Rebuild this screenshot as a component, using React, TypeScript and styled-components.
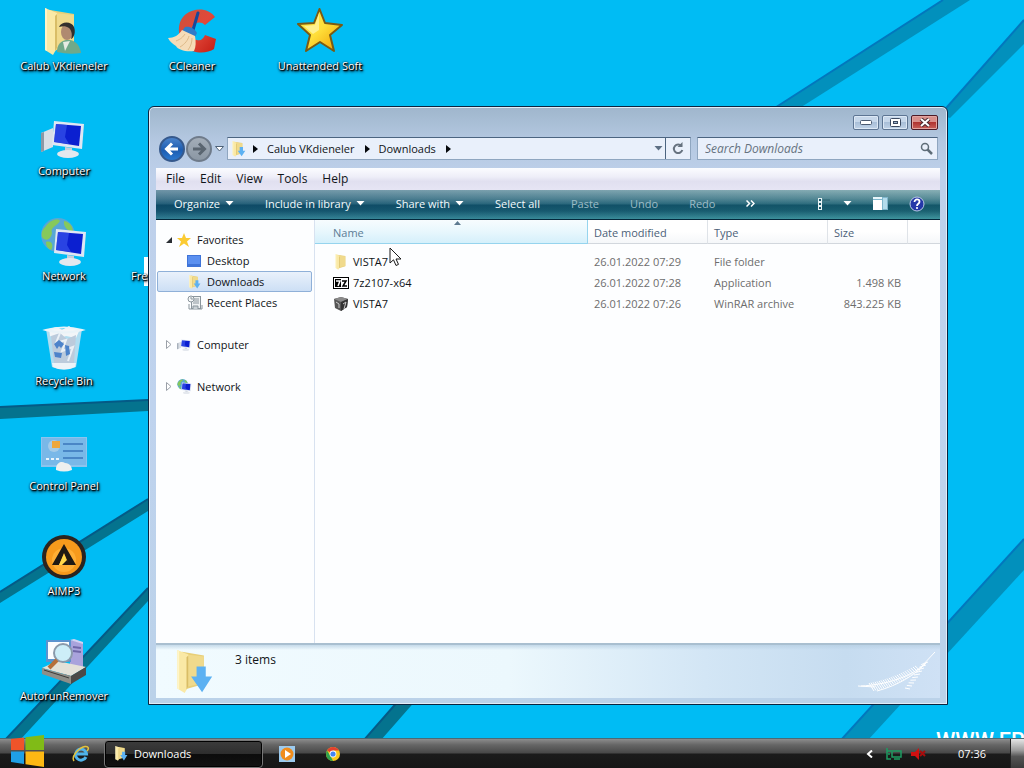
import React from 'react';
import styled, { createGlobalStyle, css } from 'styled-components';

const GlobalStyle = createGlobalStyle`
  *, *::before, *::after { box-sizing: border-box; }
  body {
    margin: 0;
    font-family: 'Open Sans', 'Noto Sans', sans-serif;
    font-size: 11px;
    line-height: 16px;
    color: #101418;
    overflow: hidden;
  }
  button, input { font: inherit; color: inherit; }
  button { border: 0; padding: 0; background: none; }
  a { color: inherit; text-decoration: none; }
  svg { display: block; flex: none; }
`;

/* ---------- desktop ---------- */

const Screen = styled.div`
  display: flex;
  flex-direction: column;
  height: 100vh;
`;

const Desktop = styled.main`
  position: relative;
  flex: 1;
  min-height: 0;
  overflow: hidden;
  background: #00bcf4;
`;

const Wallpaper = styled.svg`
  position: absolute;
  inset: 0;
  width: 100%;
  height: 100%;
`;

const IconGrid = styled.div`
  position: relative;
  display: grid;
  grid-template-columns: repeat(3, 128px);
  grid-auto-rows: 105px;
`;

const labelText = css`
  color: #fff;
  font-size: 11px;
  line-height: 16px;
  white-space: nowrap;
  text-shadow: 1px 1px 1px #000, 1px 1px 2px #000, 1px 2px 3px #012, 0 0 2px #024;
`;

const Shortcut = styled.button<{ $col: number; $row: number }>`
  grid-column: ${p => p.$col};
  grid-row: ${p => p.$row};
  display: flex;
  flex-direction: column;
  align-items: center;
  gap: 2px;
  padding-top: 8px;
`;

const ShortcutLabel = styled.span`
  ${labelText}
`;

const StackedShortcut = styled.button`
  grid-column: 2;
  grid-row: 3;
  display: grid;
  justify-items: start;
  align-content: start;
  padding: 47px 0 0 3px;
  > * { grid-area: 1 / 1; }
`;

const Sheet = styled.span`
  width: 24px;
  height: 29px;
  margin-left: 13px;
  background: #fff;
`;

const StackedLabel = styled.span`
  ${labelText}
  padding-top: 11px;
`;

const Cursor = styled.svg`
  position: absolute;
  left: 389px;
  top: 247px;
`;

/* ---------- window ---------- */

const Window = styled.section`
  position: absolute;
  left: 148px;
  top: 106px;
  right: 76px;
  bottom: 33px;
  display: flex;
  flex-direction: column;
  padding: 0 7px 6px;
  border: 1px solid #0b2440;
  border-radius: 6px 6px 0 0;
  background: linear-gradient(180deg, #9fb6cc 0, #b4c8e1 34px, #bed0ea 70px, #bfd3ee 300px, #bbd2e9 100%);
  box-shadow: inset 0 0 0 1px #e2edf7;
`;

const TitleBar = styled.header`
  display: flex;
  justify-content: flex-end;
  gap: 3px;
  padding: 8px 2px 7px 0;
`;

const Caption = styled.button<{ $close?: boolean }>`
  display: flex;
  align-items: center;
  justify-content: center;
  width: ${p => (p.$close ? '27px' : '26px')};
  height: 15px;
  border: 1px solid ${p => (p.$close ? '#4d1a26' : '#5d7593')};
  border-radius: 2px;
  background: ${p =>
    p.$close
      ? 'linear-gradient(180deg, #d88f8b 0 45%, #b03431 50%, #c9605a 100%)'
      : 'linear-gradient(180deg, #c6d7ea 0 45%, #a9bfd8 50%, #c0d3e8 100%)'};
  box-shadow: inset 0 0 0 1px ${p => (p.$close ? '#e2a5a0' : '#dce8f5')};
`;

const NavRow = styled.div`
  display: flex;
  align-items: center;
  gap: 6px;
  height: 23px;
  margin-bottom: 8px;
  padding: 0 2px 0 3px;
`;

const History = styled.div`
  display: flex;
  align-items: center;
  gap: 1px;
  width: 62px;
`;

const Round = styled.button<{ $muted?: boolean }>`
  width: 26px;
  height: 26px;
  border: 2px solid ${p => (p.$muted ? '#6f7b8a' : '#36598c')};
  border-radius: 50%;
  background: ${p =>
    p.$muted
      ? 'linear-gradient(180deg, #a3adb8, #8b97a4)'
      : 'linear-gradient(180deg, #4a83cb, #1d5cb0 55%, #2a78cf)'};
`;

const Recent = styled.button`
  padding: 2px;
`;

const fieldBox = css`
  border: 1px solid #8fa6c0;
  border-top-color: #4b6480;
  background: #e9f0fb;
`;

const Address = styled.div`
  ${fieldBox}
  flex: 460 1 0;
  display: flex;
  align-items: center;
  align-self: stretch;
  min-width: 0;
  padding-left: 2px;
`;

const RootCrumb = styled.button`
  padding-left: 7px;
`;

const Crumb = styled.a`
  padding: 0 10px 0 9px;
  white-space: nowrap;
`;

const Spacer = styled.span`
  flex: 1;
`;

const DropButton = styled.button`
  padding: 0 2px;
`;

const Refresh = styled.button`
  display: flex;
  align-items: center;
  justify-content: center;
  align-self: stretch;
  width: 25px;
  border-left: 1px solid #4b6480;
`;

const Search = styled.label`
  ${fieldBox}
  flex: 228 1 0;
  display: flex;
  align-items: center;
  align-self: stretch;
  min-width: 0;
  padding: 0 4px 0 7px;
`;

const SearchInput = styled.input`
  flex: 1;
  min-width: 0;
  padding: 0;
  border: 0;
  outline: 0;
  background: none;
  font-size: 12px;
  &::placeholder { color: #66727f; font-style: italic; opacity: 1; }
`;

const MenuBar = styled.nav`
  display: flex;
  align-items: center;
  gap: 15px;
  height: 22px;
  padding-left: 10px;
  background: linear-gradient(180deg, #fbfcff 0, #eeeef8 40%, #e1e0f0 60%, #e6e5f4 100%);
`;

const MenuItem = styled.button`
  font-size: 12px;
`;

const CommandBar = styled.div`
  display: flex;
  align-items: center;
  gap: 31px;
  height: 30px;
  padding: 0 15px 2px 18px;
  border-bottom: 1px solid #03283c;
  background:
    linear-gradient(90deg, rgba(10, 60, 110, 0.25), rgba(60, 150, 140, 0.12)),
    linear-gradient(180deg, #93b3bb 0, #5a8a98 30%, #2d6a7d 48%, #0e4d63 52%, #16596d 72%, #4095a0 100%);
`;

const Command = styled.button<{ $muted?: boolean }>`
  display: flex;
  align-items: center;
  gap: 5px;
  color: ${p => (p.$muted ? '#9dbcc6' : '#f2fafc')};
  white-space: nowrap;
`;

const ViewTools = styled.div`
  display: flex;
  align-items: center;
  gap: 21px;
  margin-left: auto;
`;

const ViewSwitch = styled.button`
  display: flex;
  align-items: center;
  gap: 13px;
`;

const Body = styled.div`
  flex: 1;
  display: flex;
  min-height: 0;
  background: #fdfeff;
`;

const Sidebar = styled.nav`
  width: 159px;
  flex: none;
  padding: 9px 2px 0 1px;
  border-right: 1px solid #d8e2f0;
`;

const Tree = styled.ul`
  display: flex;
  flex-direction: column;
  gap: 21px;
  margin: 0;
  padding: 0;
  list-style: none;
`;

const Branch = styled.ul`
  margin: 0;
  padding: 0;
  list-style: none;
`;

const TreeLink = styled.a<{ $child?: boolean; $selected?: boolean }>`
  display: flex;
  align-items: center;
  height: 21px;
  padding-left: ${p => (p.$child ? '29px' : '8px')};
  border: 1px solid transparent;
  border-radius: 2px;
  white-space: nowrap;
  ${p =>
    p.$selected &&
    css`
      border-color: #8fb0d8;
      background: linear-gradient(180deg, #e9f1fb, #cddff5);
    `}
`;

const TreeIcon = styled.span`
  width: 20px;
  flex: none;
`;

const Twisty = styled.span`
  width: 11px;
  flex: none;
`;

const Listing = styled.div`
  flex: 1;
  min-width: 0;
`;

const Files = styled.table`
  width: 100%;
  table-layout: fixed;
  border-collapse: separate;
  border-spacing: 0;
  tbody::before { content: ''; display: block; height: 7px; }
`;

const Col = styled.col<{ $w?: number }>`
  width: ${p => (p.$w ? `${p.$w}px` : 'auto')};
`;

const Head = styled.th<{ $sorted?: boolean }>`
  position: relative;
  height: 24px;
  padding: 2px 6px 0;
  text-align: left;
  font-weight: 400;
  color: #4c5f78;
  border-right: 1px solid #dfe3e8;
  border-bottom: 1px solid #d2d7dd;
  background: linear-gradient(180deg, #fff 0 50%, #f5f7f9 100%);
  &:last-child { border-right: 0; }
  ${p =>
    p.$sorted &&
    css`
      padding-left: 18px;
      color: #5c7d96;
      border-color: #96d4ee;
      background: linear-gradient(180deg, #f7fcfe 0, #e8f7fd 50%, #d5f0fb 100%);
    `}
`;

const SortMark = styled.svg`
  position: absolute;
  top: 1px;
  left: 51%;
`;

const Cell = styled.td<{ $right?: boolean }>`
  height: 21px;
  padding: 0 7px 0 6px;
  color: #6d6d6d;
  text-align: ${p => (p.$right ? 'right' : 'left')};
  white-space: nowrap;
`;

const FileName = styled.a`
  display: flex;
  align-items: center;
  gap: 4px;
  padding-left: 12px;
  color: #101418;
`;

const Details = styled.footer`
  display: flex;
  align-items: flex-start;
  height: 55px;
  padding: 5px 3px 0 14px;
  border-top: 2px solid #a9bfd0;
  background:
    linear-gradient(180deg, rgba(180, 205, 225, 0.7), rgba(180, 205, 225, 0) 5px),
    linear-gradient(90deg, #f1fbff 0, #ecf8fd 45%, #d3e6f5 70%, #c6dcf0 88%, #cfe1f5 100%);
`;

const Count = styled.p`
  flex: 1;
  margin: 2px 0 0 21px;
  font-size: 12px;
`;

/* ---------- taskbar ---------- */

const Taskbar = styled.footer`
  position: relative;
  display: flex;
  align-items: center;
  height: 30px;
  border-top: 1px solid #4b6a76;
  background: linear-gradient(180deg, #8d8d8d 0, #666 20%, #484848 48%, #1b1b1b 52%, #161616 100%);
`;

const Start = styled.button`
  margin: -6px 0 0 11px;
  height: 32px;
`;

const TaskIcon = styled.button`
  display: flex;
  justify-content: center;
  width: 46px;
`;

const QuickLaunch = styled.div`
  display: flex;
  justify-content: center;
  width: 59px;
  padding-left: 12px;
`;

const TaskButton = styled.button`
  display: flex;
  align-items: center;
  gap: 6px;
  width: 159px;
  height: 28px;
  margin-right: 1px;
  padding-left: 8px;
  border: 1px solid #777;
  border-radius: 4px;
  color: #fff;
  background: linear-gradient(180deg, #3c3c3c 0, #2e2e2e 48%, #0c0c0c 52%, #121212 100%);
  box-shadow: inset 0 0 0 1px #000;
`;

const Tray = styled.div`
  display: flex;
  align-items: center;
  margin-left: auto;
  height: 100%;
  color: #fff;
`;

const TrayIcons = styled.div`
  display: flex;
  align-items: center;
  gap: 9px;
`;

const TrayToggle = styled.button`
  padding-right: 4px;
`;

const Clock = styled.time`
  margin: 0 24px 0 32px;
`;

const ShowDesktop = styled.button`
  width: 14px;
  height: 100%;
  border-left: 1px solid #222;
  background: linear-gradient(180deg, #e6e6e6 0, #9a9a9a 40%, #555 60%, #3a3a3a 100%);
`;

/* ---------- drawings ---------- */

const FolderShape = () => (
  <>
    <path d="M13 2 L37 6 V37 L13 44Z" fill="#e8cf78" />
    <path d="M18 5 L37 7 V36 L18 40Z" fill="#f0da8c" />
    <path d="M8 0 L20 5 V40 L16 47 L8 42Z" fill="#fae9a6" />
    <path d="M8 0 L10 1 V43 L8 42Z" fill="#fff5c8" />
    <path d="M20 6 V40 L18 43 V8Z" fill="#d9bd66" />
  </>
);

const UserFolder = () => (
  <svg width="48" height="48" viewBox="0 0 48 48">
    <g transform="translate(-3 0)">
      <FolderShape />
      <path d="M20 44 C20 36 24 33 29 32 H33 C39 33 43 38 44 45 Q32 47 20 44Z" fill="#6fa98a" />
      <path d="M26 34 L28 43 L33 33Z" fill="#e6ebe4" />
      <ellipse cx="30" cy="24" rx="6" ry="8" fill="#b08a70" />
      <path d="M22 19 C24 13 35 13 37 19 C39 24 37 30 34 31 C36 26 34 22 32 20 C29 18 26 18 22 19Z" fill="#33302d" />
    </g>
  </svg>
);

const CCleaner = () => (
  <svg width="48" height="48" viewBox="0 0 48 48">
    <defs>
      <linearGradient id="cc" x1="0" y1="0" x2="1" y2="1">
        <stop offset="0" stopColor="#c9523c" />
        <stop offset=".5" stopColor="#e2483a" />
        <stop offset="1" stopColor="#c41d14" />
      </linearGradient>
    </defs>
    <path d="M47 9 L37 17 C33 13 27 14 24 19 C22 24 24 31 29 32 C33 33 35 31 37 27 L48 31 L46 41 C39 46 25 46 18 39 C9 30 8 14 18 6 C27 -1 41 0 47 9Z" fill="url(#cc)" />
    <path d="M30 5 L25 22" stroke="#17489a" strokeWidth="3" strokeLinecap="round" />
    <path d="M17 19 C22 18 27 21 29 25 L27 29 L14 23Z" fill="#2f7bc8" />
    <path d="M14 22 L27 28 C28 34 28 39 26 43 C18 44 10 42 8 38 C5 36 2 34 0 30 C6 30 11 27 14 22Z" fill="#f5dcb8" />
    <path d="M8 33 C13 31 15 29 17 26 M12 39 C17 36 20 32 21 28 M20 42 C23 38 24 34 24 30" stroke="#ddb988" fill="none" />
  </svg>
);

const Star = () => (
  <svg width="48" height="48" viewBox="0 0 48 48">
    <defs>
      <linearGradient id="st" x1="0" y1="0" x2="1" y2="1">
        <stop offset="0" stopColor="#ffe94a" />
        <stop offset=".5" stopColor="#ffdf3a" />
        <stop offset="1" stopColor="#ee9a00" />
      </linearGradient>
    </defs>
    <path d="M23.500 1 L29 15 L46 17 L34 27 L38 43 L24 34 L10 43 L14 27 L2 16 L18 15Z" fill="url(#st)" stroke="#7a5a14" strokeWidth="2" strokeLinejoin="round" />
    <path d="M23 5 L19 17 L8 18 L17 26 L23 22Z" fill="#fff8b0" opacity=".7" />
  </svg>
);

const Monitor = () => (
  <>
    <path d="M14 8 L44 11 L42 36 L12 32Z" fill="#dfe6f3" />
    <path d="M16 11 L41 13 L39 33 L14 29Z" fill="#0b1fd0" />
    <path d="M16 11 L27 12 L25 24 L29 31 L14 29Z" fill="#3d5cf0" opacity=".6" />
    <path d="M25 34 L32 35 V41 H25Z" fill="#c8cfda" />
    <ellipse cx="28" cy="41" rx="11" ry="4" fill="#e4e8ee" />
  </>
);

const ComputerIcon = ({ size = 48 }: { size?: number }) => (
  <svg width={size} height={size} viewBox="0 0 48 48">
    <path d="M1 20 L13 15 V34 L1 39Z" fill="#dadfe6" />
    <path d="M1 20 L4 19 V38 L1 39Z" fill="#8d98a5" />
    <Monitor />
  </svg>
);

const NetworkIcon = ({ size = 48 }: { size?: number }) => (
  <svg width={size} height={size} viewBox="0 0 48 48">
    <circle cx="18" cy="17" r="17" fill="#57a7d6" />
    <path d="M6 8 C10 2 18 0 20 3 C17 8 10 9 12 15 C11 22 5 24 2 19 C1 14 3 11 6 8Z M6 24 C12 22 14 28 11 32 C7 30 6 27 6 24Z M24 3 C30 4 33 9 33 14 C28 13 23 9 24 3Z" fill="#86c95b" />
    <g transform="translate(2 3)"><Monitor /></g>
  </svg>
);

const RecycleBin = () => (
  <svg width="48" height="48" viewBox="0 0 48 48">
    <path d="M6 6 L42 6 L36 44 Q24 49 12 44Z" fill="#cfe3f0" opacity=".85" />
    <path d="M9 6 L17 4 L22 7 L29 3 L33 6 L40 6 L36 15 L26 13 L18 16 L10 13Z" fill="#f2f5f8" />
    <path d="M11 13 L20 10 L27 16 L36 12 L34 40 L24 43 L14 40Z" fill="#bccbdc" />
    <path d="M20 10 L16 20 L26 17 L22 28 L33 24 L28 38" fill="none" stroke="#eaf0f6" strokeWidth="2" />
    <path d="M14 21 L19 17 L24 21 L21 25 L19 23 L17 26Z M25 22 L29 23 L30 31 L26 33Z M14 29 L22 30 L21 35 L15 34Z" fill="#4d83ca" />
    <path d="M12 40 L36 40 L35 44 Q24 49 13 44Z" fill="#edf3f8" />
    <path d="M6 7 Q24 2 42 7 Q24 12 6 7Z" fill="none" stroke="#eaf3f8" strokeWidth="2" />
  </svg>
);

const ControlPanel = () => (
  <svg width="48" height="48" viewBox="0 0 48 48">
    <rect x="1" y="9" width="46" height="30" fill="#8cc4ee" />
    <rect x="2" y="10" width="44" height="27" fill="#79b8e8" />
    <circle cx="14" cy="18" r="6" fill="#a4cbe8" />
    <path d="M12 13 H20 V20 H12Z" fill="#eda73c" />
    <path d="M23 16 H43 M23 23 H43 M23 30 H43" stroke="#4a86c6" strokeWidth="2" />
    <path d="M6 31 H19" stroke="#e8f4fc" strokeWidth="2" strokeDasharray="3 2" />
    <path d="M16 40 C17 34 22 33 25 35 C30 35 32 39 32 42 Q24 45 16 42Z" fill="#edf0ef" />
  </svg>
);

const Aimp = () => (
  <svg width="48" height="48" viewBox="0 0 48 48">
    <circle cx="24" cy="24" r="22" fill="#2a2420" />
    <circle cx="24" cy="24" r="18" fill="#f79a1c" />
    <circle cx="24" cy="27" r="12" fill="#ffae34" />
    <path d="M24 11 L36 32 H29 L24 20 L19 32 H12Z" fill="#201a14" />
    <path d="M24 21 L27 28 L22 32 H19Z" fill="#ffd84a" />
    <path d="M22 32 L27 27 L30 32Z" fill="#201a14" />
  </svg>
);

const Autorun = () => (
  <svg width="48" height="48" viewBox="0 0 48 48">
    <path d="M30 2 L43 5 V30 L30 32Z" fill="#a9a3dc" />
    <path d="M30 2 L34 1 L43 4 V6Z" fill="#d5d2f3" />
    <path d="M33 9 L41 10 M33 13 L41 14" stroke="#6e67a8" strokeWidth="2" />
    <path d="M6 2 H31 V24 H6Z" fill="#5b93cf" />
    <path d="M8 4 H29 V21 H8Z" fill="#fbfdff" />
    <path d="M2 30 L17 23 L46 29 L31 38Z" fill="#e3e1d8" />
    <path d="M2 30 L31 38 V46 L2 36Z" fill="#8f8e88" />
    <path d="M31 38 L46 29 V37 L31 46Z" fill="#4b4a48" />
    <path d="M4 32 L29 40" stroke="#3c3b39" />
    <circle cx="23" cy="15" r="9" fill="#cdeef8" stroke="#8b9aab" strokeWidth="2" />
    <path d="M17 22 L9 30" stroke="#b66f3a" strokeWidth="4" />
  </svg>
);

const FolderIcon = ({ size = 16, arrow = false }: { size?: number; arrow?: boolean }) => (
  <svg width={size} height={size} viewBox="0 0 48 48">
    <FolderShape />
    {arrow && <path d="M29 18 H39 V29 H46 L35 46 L23 29 H29Z" fill="#5cb1f2" />}
  </svg>
);

const SmallStar = () => (
  <svg width="14" height="14" viewBox="0 0 14 14">
    <path d="M7 0 L9 5 L14 5 L10 8.500 L12 14 L7 10.500 L2 14 L4 8.500 L0 5 L5 5Z" fill="#fbcb33" />
  </svg>
);

const DesktopGlyph = () => (
  <svg width="14" height="12" viewBox="0 0 14 12">
    <rect width="14" height="12" fill="#3f74d8" />
    <rect x="1" y="1" width="12" height="8" fill="#5b90f0" />
  </svg>
);

const RecentGlyph = () => (
  <svg width="16" height="16" viewBox="0 0 16 16" fill="none" stroke="#8b969d">
    <rect x="4.500" y="1.500" width="9" height="12" fill="#eef1f2" />
    <circle cx="4" cy="4" r="3" fill="#f6f8f8" />
    <path d="M4 2 V4 H6 M7 4 H12 M7 6 H12 M6 8 H12 M2 9 V14 H15 V10" />
    <path d="M6 14 V11 H11 V14" fill="#c8d0d4" />
  </svg>
);

const Caret = ({ color = '#fff' }: { color?: string }) => (
  <svg width="9" height="5" viewBox="0 0 9 5"><path d="M.500 0 H8.500 L4.500 4.500Z" fill={color} /></svg>
);

const Chevron = () => (
  <svg width="5" height="8" viewBox="0 0 5 8"><path d="M0 0 L5 4 L0 8Z" fill="#05080c" /></svg>
);

const SevenZip = () => (
  <svg width="16" height="12" viewBox="0 0 16 12">
    <rect width="16" height="12" fill="#000" />
    <rect x="1" y="1" width="14" height="10" fill="#fff" />
    <rect x="2" y="2" width="6" height="8" fill="#000" />
    <path d="M3 4 H7 L5 9" fill="none" stroke="#fff" strokeWidth="1.500" />
    <path d="M9 4 H13 L10 9 H14" fill="none" stroke="#000" strokeWidth="1.500" />
  </svg>
);

const Archive = () => (
  <svg width="16" height="16" viewBox="0 0 16 16">
    <path d="M1 3 L8 1 L15 3 L14 11 L8 15 L2 12Z" fill="#555" />
    <path d="M1 3 L8 1 L15 3 L8 6Z" fill="#8a8a8a" />
    <path d="M8 6 L15 3 L14 11 L8 15Z" fill="#333" />
    <path d="M3 6 L6 8 V12 M10 8 L13 6 L11 13" fill="none" stroke="#c8c8c8" />
  </svg>
);

const Feather = () => (
  <svg width="80" height="44" viewBox="0 0 80 44" fill="none" stroke="#fff">
    {Array.from({ length: 24 }, (_, i) => {
      const x = 12 + i * 2;
      const y = 37 - i * 0.4 - i * i * 0.018;
      const h = 8 - i * 0.14;
      return <path key={i} d={`M${x} ${y - h / 2} L${x + 5} ${y + h / 2}`} />;
    })}
    {Array.from({ length: 10 }, (_, i) => (
      <path key={i} d={`M${48 + i * 1.8} ${38 - i * 2.6} L${53 + i * 2} ${39 - i * 3}`} />
    ))}
    <path d="M1 36 L18 37 M4 36 C28 35 52 27 64 17 L78 2 M20 41 C42 35 58 25 70 12" />
  </svg>
);

const Windows = () => (
  <svg width="34" height="32" viewBox="0 0 34 32">
    <path d="M0 4 L13 2.500 V15 H0Z" fill="#f0542a" />
    <path d="M14.500 2.300 L33 0 V15 H14.500Z" fill="#80bb17" />
    <path d="M0 16.500 H13 V29 L0 27Z" fill="#1f9fe6" />
    <path d="M14.500 16.500 H33 V32 L14.500 29.300Z" fill="#fdb813" />
  </svg>
);

const Explorer = () => (
  <svg width="18" height="18" viewBox="0 0 18 18" fill="none">
    <path d="M14 12 A5.500 5.500 0 1 1 14.500 9 H5" stroke="#4fb3ea" strokeWidth="3" />
    <path d="M2 16 C-1 12 6 3 13 1.500 C17 1 17 4 15 6" stroke="#e5c33a" strokeWidth="1.500" />
  </svg>
);

const MediaPlayer = () => (
  <svg width="16" height="16" viewBox="0 0 16 16">
    <rect width="16" height="16" fill="#9ccbef" />
    <circle cx="8" cy="8" r="6.500" fill="#f08c1c" />
    <path d="M6 4 L12 8 L6 12Z" fill="#fff" />
  </svg>
);

const Chrome = () => (
  <svg width="14" height="14" viewBox="0 0 14 14">
    <circle cx="7" cy="7" r="7" fill="#f9c81c" />
    <path d="M7 7 L1 3.500 A7 7 0 0 1 13 3.500 H7Z" fill="#e2402f" />
    <path d="M1 3.500 L4.500 9 L7 14 A7 7 0 0 1 1 3.500Z" fill="#2fa24f" />
    <circle cx="7" cy="7" r="3.400" fill="#fff" />
    <circle cx="7" cy="7" r="2.600" fill="#4285f4" />
  </svg>
);

const ClosedTwisty = () => (
  <svg width="6" height="9" viewBox="0 0 6 9"><path d="M.500 .500 L5 4.500 L.500 8.500Z" fill="#fff" stroke="#9aa0a8" /></svg>
);

/* ---------- data ---------- */

const shortcuts = [
  { label: 'Calub VKdieneler', col: 1, row: 1, icon: <UserFolder /> },
  { label: 'CCleaner', col: 2, row: 1, icon: <CCleaner /> },
  { label: 'Unattended Soft', col: 3, row: 1, icon: <Star /> },
  { label: 'Computer', col: 1, row: 2, icon: <ComputerIcon /> },
  { label: 'Network', col: 1, row: 3, icon: <NetworkIcon /> },
  { label: 'Recycle Bin', col: 1, row: 4, icon: <RecycleBin /> },
  { label: 'Control Panel', col: 1, row: 5, icon: <ControlPanel /> },
  { label: 'AIMP3', col: 1, row: 6, icon: <Aimp /> },
  { label: 'AutorunRemover', col: 1, row: 7, icon: <Autorun /> },
];

const commands = [
  { label: 'Organize', menu: true },
  { label: 'Include in library', menu: true },
  { label: 'Share with', menu: true },
  { label: 'Select all' },
  { label: 'Paste', muted: true },
  { label: 'Undo', muted: true },
  { label: 'Redo', muted: true },
];

const files = [
  { name: 'VISTA7', date: '26.01.2022 07:29', type: 'File folder', size: '', icon: <FolderIcon /> },
  { name: '7z2107-x64', date: '26.01.2022 07:28', type: 'Application', size: '1.498 KB', icon: <SevenZip /> },
  { name: 'VISTA7', date: '26.01.2022 07:26', type: 'WinRAR archive', size: '843.225 KB', icon: <Archive /> },
];

const beams = [
  { d: 'M0 407 L148 400 V411 L0 419Z', edge: 'M0 407 L148 400', dark: true },
  { d: 'M0 592 L148 499 V511 L0 603Z', edge: 'M0 592 L148 499', dark: true },
  { d: 'M5 740 L148 588 V601 L20 740Z', edge: 'M5 740 L148 588', dark: true },
  { d: 'M364 740 L400 699 H417 L381 740Z', edge: 'M364 740 L400 699', dark: true },
  { d: 'M770 111 L943 0 H970 L795 111Z', edge: 'M770 111 L943 0' },
  { d: 'M940 115 L1024 20 V44 L950 118Z', edge: 'M940 115 L1024 20' },
  { d: 'M841 740 L1024 539 V570 L868 740Z', edge: 'M841 740 L1024 539' },
];

export default function App() {
  return (
    <Screen>
      <GlobalStyle />
      <Desktop>
        <Wallpaper viewBox="0 0 1024 738" preserveAspectRatio="xMinYMin slice">
          {beams.map(b => (
            <g key={b.d}>
              <path d={b.d} fill={b.dark ? '#04738e' : '#0290bc'} />
              <path d={b.edge} stroke={b.dark ? '#045a86' : '#0277bd'} strokeWidth="2" />
            </g>
          ))}
          <text x="936" y="748" fill="#fff" fontFamily="Roboto, sans-serif" fontSize="22" fontWeight="500">WWW.FR</text>
        </Wallpaper>

        <IconGrid>
          {shortcuts.map(s => (
            <Shortcut key={s.label} $col={s.col} $row={s.row}>
              {s.icon}
              <ShortcutLabel>{s.label}</ShortcutLabel>
            </Shortcut>
          ))}
          <StackedShortcut>
            <Sheet />
            <StackedLabel>Fre</StackedLabel>
          </StackedShortcut>
        </IconGrid>

        <Window aria-label="Downloads">
          <TitleBar>
            <Caption aria-label="Minimize">
              <svg width="12" height="5" viewBox="0 0 12 5"><rect x=".500" y=".500" width="11" height="4" rx="1" fill="#fff" stroke="#4a5a70" /></svg>
            </Caption>
            <Caption aria-label="Maximize">
              <svg width="11" height="9" viewBox="0 0 11 9"><rect x=".500" y=".500" width="10" height="8" rx="1" fill="#fff" stroke="#3b4960" /><rect x="3.500" y="3.500" width="4" height="2" fill="#9db3cc" stroke="#3b4960" /></svg>
            </Caption>
            <Caption aria-label="Close" $close>
              <svg width="12" height="9" viewBox="0 0 12 9"><path d="M2 1 L10 8 M10 1 L2 8" stroke="#4a2a30" strokeWidth="4" /><path d="M2 1 L10 8 M10 1 L2 8" stroke="#fff" strokeWidth="2" /></svg>
            </Caption>
          </TitleBar>

          <NavRow>
            <History>
              <Round aria-label="Back">
                <svg width="22" height="22" viewBox="0 0 22 22" fill="none" stroke="#fff" strokeWidth="3"><path d="M17 11 H6 M11 5.500 L5.500 11 L11 16.500" /></svg>
              </Round>
              <Round aria-label="Forward" $muted>
                <svg width="22" height="22" viewBox="0 0 22 22" fill="none" stroke="#5a6570" strokeWidth="3"><path d="M5 11 H16 M11 5.500 L16.500 11 L11 16.500" /></svg>
              </Round>
              <Recent aria-label="Recent pages">
                <svg width="9" height="6" viewBox="0 0 9 6"><path d="M.500 .500 H8.500 L4.500 5Z" fill="#fff" stroke="#4d6178" /></svg>
              </Recent>
            </History>
            <Address>
              <FolderIcon arrow />
              <RootCrumb aria-label="Locations"><Chevron /></RootCrumb>
              <Crumb href="#user">Calub VKdieneler</Crumb>
              <Chevron />
              <Crumb href="#downloads">Downloads</Crumb>
              <Chevron />
              <Spacer />
              <DropButton aria-label="Previous locations"><Caret color="#5d6f84" /></DropButton>
              <Refresh aria-label="Refresh">
                <svg width="12" height="13" viewBox="0 0 12 13" fill="none" stroke="#66727f" strokeWidth="2"><path d="M9.500 4 A4.300 4.300 0 1 0 10.300 8" /><path d="M10.500 0 V5 H5.500Z" fill="#66727f" stroke="none" /></svg>
              </Refresh>
            </Address>
            <Search>
              <SearchInput placeholder="Search Downloads" aria-label="Search Downloads" />
              <svg width="13" height="13" viewBox="0 0 13 13" fill="none" stroke="#5f6d78"><circle cx="5" cy="5" r="3.500" strokeWidth="1.500" /><path d="M7.500 7.500 L12 12" strokeWidth="2.500" /></svg>
            </Search>
          </NavRow>

          <MenuBar>
            {['File', 'Edit', 'View', 'Tools', 'Help'].map(m => <MenuItem key={m}>{m}</MenuItem>)}
          </MenuBar>

          <CommandBar>
            {commands.map(c => (
              <Command key={c.label} $muted={c.muted}>
                {c.label}
                {c.menu && <Caret />}
              </Command>
            ))}
            <Command aria-label="More commands">
              <svg width="9" height="7" viewBox="0 0 9 7" fill="none" stroke="#fff" strokeWidth="1.500"><path d="M.500 .500 L3.500 3.500 L.500 6.500 M5 .500 L8 3.500 L5 6.500" /></svg>
            </Command>
            <ViewTools>
              <ViewSwitch aria-label="Change view">
                <svg width="13" height="12" viewBox="0 0 13 12"><path d="M1 0 H5 V12 H1Z" fill="#e8f2f4" /><path d="M2 1 H4 V3 H2Z M2 5 H4 V7 H2Z M2 9 H4 V11 H2Z" fill="#1c5a6c" /><path d="M6 2 H13" stroke="#28606f" /></svg>
                <Caret />
              </ViewSwitch>
              <Command aria-label="Preview pane">
                <svg width="15" height="13" viewBox="0 0 15 13"><rect width="15" height="13" fill="#7fb6cc" /><rect y="3" width="9" height="10" fill="#fff" /><rect width="9" height="2" fill="#e9f6fb" /><rect x="10" y="1" width="4" height="11" fill="#b4dcec" /></svg>
              </Command>
              <Command aria-label="Help">
                <svg width="16" height="16" viewBox="0 0 16 16"><circle cx="8" cy="8" r="7" fill="#2438a8" stroke="#b9c8e4" /><path d="M5.500 6 C5.500 2.500 10.500 2.800 10.500 5.800 C10.500 8 8 7.500 8 10" fill="none" stroke="#fff" strokeWidth="1.800" /><circle cx="8" cy="12" r="1.100" fill="#fff" /></svg>
              </Command>
            </ViewTools>
          </CommandBar>

          <Body>
            <Sidebar aria-label="Navigation pane">
              <Tree>
                <li>
                  <TreeLink href="#favorites">
                    <Twisty><svg width="6" height="6" viewBox="0 0 6 6"><path d="M6 0 V6 H0Z" fill="#2a2e33" /></svg></Twisty>
                    <TreeIcon><SmallStar /></TreeIcon>Favorites
                  </TreeLink>
                  <Branch>
                    <li><TreeLink href="#desktop" $child><TreeIcon><DesktopGlyph /></TreeIcon>Desktop</TreeLink></li>
                    <li><TreeLink href="#downloads" $child $selected><TreeIcon><FolderIcon size={14} arrow /></TreeIcon>Downloads</TreeLink></li>
                    <li><TreeLink href="#recent" $child><TreeIcon><RecentGlyph /></TreeIcon>Recent Places</TreeLink></li>
                  </Branch>
                </li>
                <li><TreeLink href="#computer"><Twisty><ClosedTwisty /></Twisty><TreeIcon><ComputerIcon size={15} /></TreeIcon>Computer</TreeLink></li>
                <li><TreeLink href="#network"><Twisty><ClosedTwisty /></Twisty><TreeIcon><NetworkIcon size={15} /></TreeIcon>Network</TreeLink></li>
              </Tree>
            </Sidebar>
            <Listing>
              <Files>
                <colgroup><Col $w={273} /><Col $w={120} /><Col $w={120} /><Col $w={80} /><Col /></colgroup>
                <thead>
                  <tr>
                    <Head $sorted>
                      Name
                      <SortMark width="7" height="4" viewBox="0 0 7 4"><path d="M0 4 L3.500 0 L7 4Z" fill="#5d7a90" /></SortMark>
                    </Head>
                    <Head>Date modified</Head>
                    <Head>Type</Head>
                    <Head>Size</Head>
                    <Head />
                  </tr>
                </thead>
                <tbody>
                  {files.map(f => (
                    <tr key={f.date}>
                      <Cell><FileName href="#file">{f.icon}{f.name}</FileName></Cell>
                      <Cell>{f.date}</Cell>
                      <Cell>{f.type}</Cell>
                      <Cell $right>{f.size}</Cell>
                      <Cell />
                    </tr>
                  ))}
                </tbody>
              </Files>
            </Listing>
          </Body>

          <Details>
            <FolderIcon size={44} arrow />
            <Count>3 items</Count>
            <Feather />
          </Details>
        </Window>

        <Cursor width="13" height="20" viewBox="0 0 13 20">
          <path d="M1 1 V16 L4.500 12.800 L7 18.500 L9.500 17.400 L7 12 H12Z" fill="#fff" stroke="#1a1a1a" />
        </Cursor>
      </Desktop>

      <Taskbar>
        <Start aria-label="Start"><Windows /></Start>
        <QuickLaunch><TaskIcon aria-label="Internet Explorer"><Explorer /></TaskIcon></QuickLaunch>
        <TaskButton><FolderIcon size={15} arrow />Downloads</TaskButton>
        <TaskIcon aria-label="Media Player"><MediaPlayer /></TaskIcon>
        <TaskIcon aria-label="Chrome"><Chrome /></TaskIcon>
        <Tray>
          <TrayIcons>
            <TrayToggle aria-label="Show hidden icons">
              <svg width="7" height="8" viewBox="0 0 7 8" fill="none" stroke="#fff" strokeWidth="2"><path d="M6 .500 L2 4 L6 7.500" /></svg>
            </TrayToggle>
            <svg width="16" height="12" viewBox="0 0 16 12" fill="none" stroke="#1c9c62" strokeWidth="1.500"><path d="M1 0 V11 H5 M1 3 H15 V9 H6 V4 M8 11 H14 M4 6 H2" /></svg>
            <svg width="15" height="12" viewBox="0 0 15 12"><path d="M0 4 H4 L8 0 V12 L4 8 H0Z" fill="#d01010" /><path d="M9 3 L14 8 M14 3 L9 8" stroke="#a80c0c" strokeWidth="2" /></svg>
          </TrayIcons>
          <Clock>07:36</Clock>
          <ShowDesktop aria-label="Show desktop" />
        </Tray>
      </Taskbar>
    </Screen>
  );
}
